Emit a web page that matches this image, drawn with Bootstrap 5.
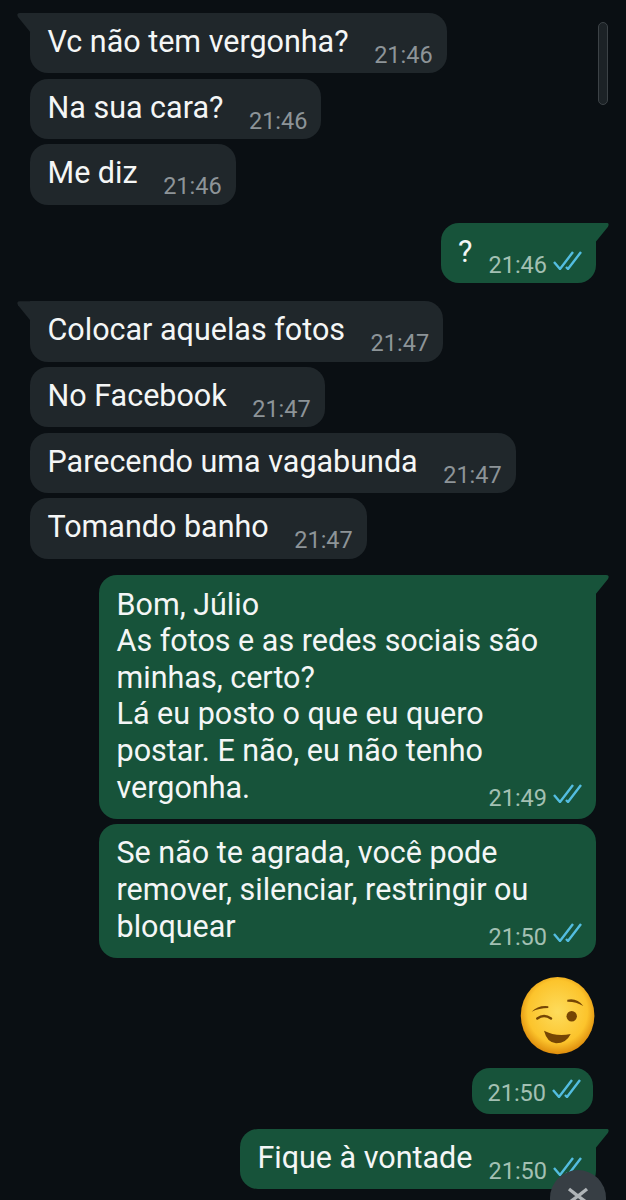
<!DOCTYPE html>
<html lang="pt-BR">
<head>
  <meta charset="UTF-8">
  <meta name="viewport" content="width=device-width, initial-scale=1">
  <title>Conversa</title>
  <link href="https://cdn.jsdelivr.net/npm/bootstrap@5.3.3/dist/css/bootstrap.min.css" rel="stylesheet">
  <style>
    html, body {
      height: 1200px;
      overflow: hidden;
    }
    body {
      background-color: #0a0f13;
      font-family: Roboto, "Liberation Sans", sans-serif;
    }
    .chat-area {
      position: relative;
      height: 1200px;
      overflow: hidden;
      padding: 13px 30px 0;
    }
    .msg {
      position: relative;
      width: fit-content;
      min-height: 60.4px;
      padding: 11px 14px 0 17.5px;
      margin-bottom: 5.3px;
      border-radius: 18px;
      font-size: 30.5px;
      line-height: 36.6px;
      color: #f4f6f6;
    }
    .msg-in {
      background-color: #20272b;
    }
    .msg-out {
      background-color: #17533a;
      margin-left: auto;
    }
    .msg-first {
      border-top-left-radius: 0;
    }
    .msg-out.msg-first {
      border-top-left-radius: 18px;
      border-top-right-radius: 0;
    }
    .msg-first::before {
      content: "";
      position: absolute;
      top: 0;
      left: -13px;
      width: 14px;
      height: 20px;
      background-color: inherit;
      clip-path: path("M3 0 H14 V20 L1 4 Q-1 0 3 0 Z");
    }
    .msg-out.msg-first::before {
      left: auto;
      right: -13px;
      clip-path: path("M11 0 H0 V20 L13 4 Q15 0 11 0 Z");
    }
    .gap-before {
      margin-top: 18px;
    }
    .msg-time {
      font-size: 23.5px;
      line-height: 28px;
      white-space: nowrap;
      color: #8d9498;
      margin-left: 25.5px;
      padding-top: 17px;
    }
    .msg-out .msg-time {
      color: #a3c0b3;
      margin-left: 0;
    }
    .ticks {
      width: 29px;
      height: 19px;
      margin-left: 6px;
    }
    .msg-long {
      width: 497px;
      padding-top: 11.5px;
      padding-bottom: 7px;
    }
    .msg-long.gap-before {
      margin-top: 16.5px;
    }
    .msg-long .msg-time {
      padding-top: 0;
      margin-top: -22.5px;
    }
    .emoji-wrap {
      margin-top: 19.5px;
      height: 78px;
    }
    .msg-only-time {
      min-height: 46px;
      margin-top: 12.5px;
      margin-right: 3px;
      padding: 11px 12px 0 15px;
    }
    .msg-only-time .msg-time {
      padding-top: 0;
    }
    .msg-last {
      margin-top: 15px;
    }
    .scroll-thumb {
      position: absolute;
      top: 22px;
      right: 18px;
      width: 10px;
      height: 83px;
      border: 1.5px solid #3c4246;
      border-radius: 5px;
      background-color: #1c2226;
    }
    .scroll-down {
      position: absolute;
      top: 1170px;
      left: 550px;
      width: 56px;
      height: 56px;
      border-radius: 50%;
      background-color: #373e44;
    }
  </style>
</head>
<body>
  <div class="chat-area">

    <div class="msg msg-in msg-first d-flex"><span>Vc não tem vergonha?</span><span class="msg-time">21:46</span></div>
    <div class="msg msg-in d-flex"><span>Na sua cara?</span><span class="msg-time">21:46</span></div>
    <div class="msg msg-in d-flex"><span>Me diz</span><span class="msg-time">21:46</span></div>

    <div class="msg msg-out msg-first gap-before d-flex">
      <span class="me-3">?</span>
      <span class="msg-time d-flex align-items-start">21:46
        <svg class="ticks" viewBox="0 0 29 19"><path d="M1 11 L7 18 L20 1 M13 16 L15 18 L28 1" fill="none" stroke="#53bde0" stroke-width="2.4"/></svg>
      </span>
    </div>

    <div class="msg msg-in msg-first gap-before d-flex"><span>Colocar aquelas fotos</span><span class="msg-time">21:47</span></div>
    <div class="msg msg-in d-flex"><span>No Facebook</span><span class="msg-time">21:47</span></div>
    <div class="msg msg-in d-flex"><span>Parecendo uma vagabunda</span><span class="msg-time">21:47</span></div>
    <div class="msg msg-in d-flex"><span>Tomando banho</span><span class="msg-time">21:47</span></div>

    <div class="msg msg-out msg-first msg-long gap-before">
      <div>Bom, Júlio<br>As fotos e as redes sociais são<br>minhas, certo?<br>Lá eu posto o que eu quero<br>postar. E não, eu não tenho<br>vergonha.</div>
      <div class="msg-time d-flex justify-content-end align-items-start">21:49
        <svg class="ticks" viewBox="0 0 29 19"><path d="M1 11 L7 18 L20 1 M13 16 L15 18 L28 1" fill="none" stroke="#53bde0" stroke-width="2.4"/></svg>
      </div>
    </div>

    <div class="msg msg-out msg-long">
      <div>Se não te agrada, você pode<br>remover, silenciar, restringir ou<br>bloquear</div>
      <div class="msg-time d-flex justify-content-end align-items-start">21:50
        <svg class="ticks" viewBox="0 0 29 19"><path d="M1 11 L7 18 L20 1 M13 16 L15 18 L28 1" fill="none" stroke="#53bde0" stroke-width="2.4"/></svg>
      </div>
    </div>

    <div class="emoji-wrap d-flex justify-content-end">
      <svg width="76" height="78" viewBox="0 0 76 78">
        <defs>
          <radialGradient id="faceFill" cx="50%" cy="45%" r="54%">
            <stop offset="0" stop-color="#fddc5c"/>
            <stop offset="0.75" stop-color="#fcc42c"/>
            <stop offset="1" stop-color="#e0900e"/>
          </radialGradient>
        </defs>
        <ellipse cx="37.6" cy="38.6" rx="36.8" ry="38.6" fill="url(#faceFill)"/>
        <circle cx="51.7" cy="39.3" r="5.2" fill="#754504"/>
        <path d="M47.3 22.7 Q57 20.5 63.3 29 Q56 24.5 47.3 24.7 Z" fill="#754504"/>
        <path d="M11.7 34.7 Q18 28 28.3 29.2 L28.3 31 Q19 31 11.7 34.7 Z" fill="#754504"/>
        <path d="M17.3 41.5 Q24 36.5 31 41.5" fill="none" stroke="#754504" stroke-width="2.4" stroke-linecap="round"/>
        <path d="M24 53.7 Q36 60 50.7 57 Q46 66.5 36 66.3 Q27 65.5 24 53.7 Z" fill="#754504"/>
      </svg>
    </div>

    <div class="msg msg-out msg-only-time">
      <div class="msg-time d-flex align-items-start">21:50
        <svg class="ticks" viewBox="0 0 29 19"><path d="M1 11 L7 18 L20 1 M13 16 L15 18 L28 1" fill="none" stroke="#53bde0" stroke-width="2.4"/></svg>
      </div>
    </div>

    <div class="msg msg-out msg-first msg-last d-flex">
      <span class="me-3">Fique à vontade</span>
      <span class="msg-time d-flex align-items-start">21:50
        <svg class="ticks" viewBox="0 0 29 19"><path d="M1 11 L7 18 L20 1 M13 16 L15 18 L28 1" fill="none" stroke="#53bde0" stroke-width="2.4"/></svg>
      </span>
    </div>

    <div class="scroll-thumb"></div>
    <div class="scroll-down d-flex justify-content-center">
      <svg class="mt-3" width="24" height="16" viewBox="0 0 24 16"><path d="M3 3 L12 10 L21 3 M4 16 L12 10 L20 16" fill="none" stroke="#b0b5b8" stroke-width="3.4"/></svg>
    </div>
  </div>

  <script src="https://cdn.jsdelivr.net/npm/bootstrap@5.3.3/dist/js/bootstrap.bundle.min.js"></script>
</body>
</html>
